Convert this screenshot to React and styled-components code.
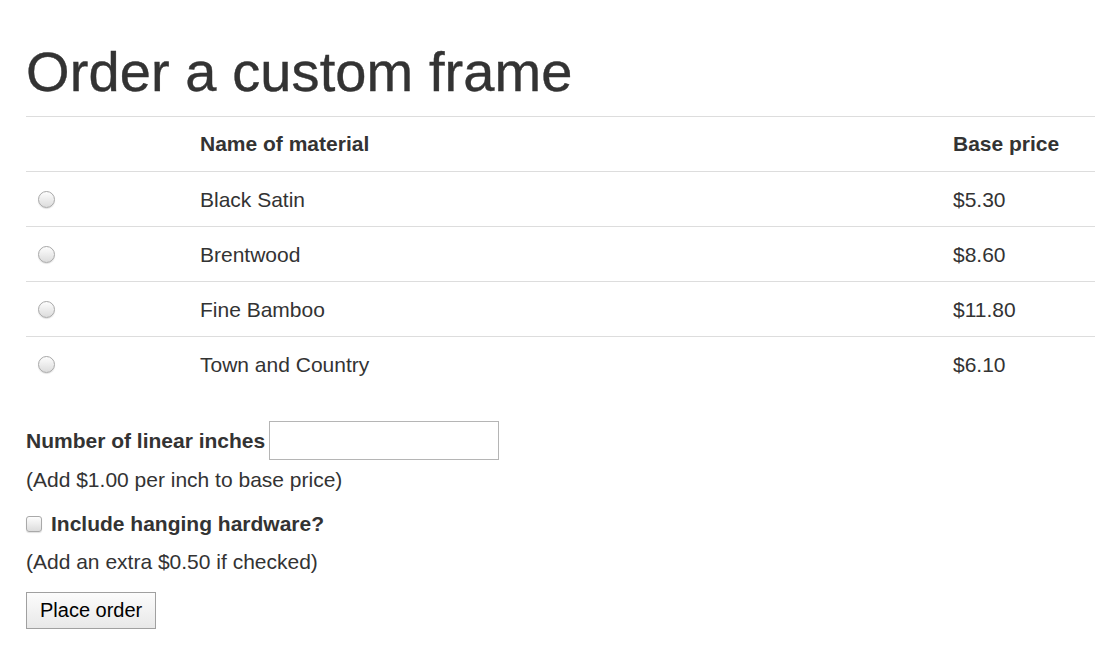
import React from "react";
import styled, { createGlobalStyle } from "styled-components";

const Global = createGlobalStyle`
  html, body { margin: 0; padding: 0; background: #fff; }
  body {
    font-family: "Liberation Sans", Arial, sans-serif;
    font-size: 21px;
    line-height: 30px;
    color: #333;
  }
`;

const Page = styled.div`
  padding: 0 0 0 26px;
  overflow: hidden;
`;

const Title = styled.h1`
  font-size: 56px;
  font-weight: 400;
  line-height: 60px;
  margin: 42px 0 14px;
  letter-spacing: 0.1px;
  -webkit-text-stroke: 0.4px #333;
`;

const Table = styled.table`
  width: calc(100% + 10px);
  border-collapse: collapse;
  margin-bottom: 30px;
`;

const Th = styled.th`
  text-align: left;
  font-weight: 700;
  padding: 12px;
  line-height: 30px;
  border-top: 1px solid #ddd;
  border-bottom: 1px solid #ddd;
  width: ${(p) => p.$w || "auto"};
`;

const Td = styled.td`
  padding: 13px 12px 11px;
  line-height: 30px;
  border-top: ${(p) => (p.$first ? "none" : "1px solid #ddd")};
  vertical-align: middle;
`;

const Radio = styled.span`
  display: inline-block;
  width: 15px;
  height: 15px;
  border-radius: 50%;
  border: 1px solid #a9a9a9;
  background: linear-gradient(#fdfdfd, #dcdcdc);
  box-shadow: 0 1px 1px rgba(0,0,0,0.12);
  vertical-align: middle;
  margin-top: -4px;
`;

const FieldRow = styled.div`
  display: flex;
  align-items: center;
  gap: 4px;
  height: 39px;
`;

const BoldLabel = styled.label`
  font-weight: 700;
`;

const Input = styled.span`
  display: inline-block;
  width: 228px;
  height: 37px;
  border: 1px solid #b5b5b5;
  background: #fff;
`;

const Note = styled.p`
  margin: ${(p) => p.$m || "0"};
  line-height: 30px;
`;

const CheckRow = styled.div`
  display: flex;
  align-items: center;
  gap: 9px;
  margin-top: ${(p) => p.$mt || "0"};
  line-height: 30px;
`;

const Checkbox = styled.span`
  display: inline-block;
  width: 14px;
  height: 14px;
  border-radius: 3px;
  border: 1px solid #a9a9a9;
  background: linear-gradient(#fdfdfd, #dcdcdc);
  box-shadow: 0 1px 1px rgba(0,0,0,0.12);
`;

const Button = styled.button`
  font-family: "Liberation Sans", Arial, sans-serif;
  font-size: 20px;
  color: #000;
  height: 37px;
  padding: 0 13px;
  border: 1px solid #a0a0a0;
  border-radius: 0;
  background: linear-gradient(#fcfcfc, #e8e8e8);
  margin-top: ${(p) => p.$mt || "0"};
  display: block;
`;

const rows = [
  ["Black Satin", "$5.30"],
  ["Brentwood", "$8.60"],
  ["Fine Bamboo", "$11.80"],
  ["Town and Country", "$6.10"],
];

export default function App() {
  return (
    <>
      <Global />
      <Page>
        <Title>Order a custom frame</Title>
        <Table>
          <thead>
            <tr>
              <Th $w="138px"></Th>
              <Th>Name of material</Th>
              <Th $w="140px">Base price</Th>
            </tr>
          </thead>
          <tbody>
            {rows.map(([name, price], i) => (
              <tr key={name}>
                <Td $first={i === 0}>
                  <Radio />
                </Td>
                <Td $first={i === 0}>{name}</Td>
                <Td $first={i === 0}>{price}</Td>
              </tr>
            ))}
          </tbody>
        </Table>
        <FieldRow>
          <BoldLabel>Number of linear inches</BoldLabel>
          <Input />
        </FieldRow>
        <Note $m="5px 0 0">(Add $1.00 per inch to base price)</Note>
        <CheckRow $mt="14px">
          <Checkbox />
          <BoldLabel>Include hanging hardware?</BoldLabel>
        </CheckRow>
        <Note $m="8px 0 0">(Add an extra $0.50 if checked)</Note>
        <Button $mt="15px">Place order</Button>
      </Page>
    </>
  );
}
